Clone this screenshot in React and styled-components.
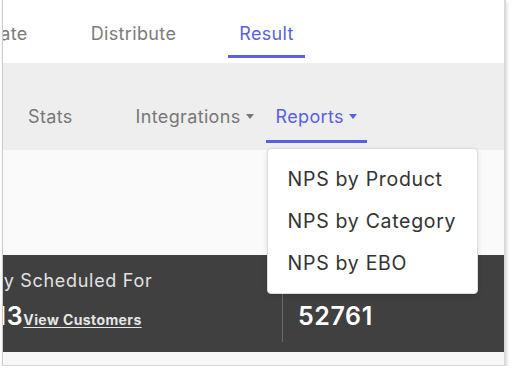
import React from "react";
import styled, { createGlobalStyle } from "styled-components";

const Global = createGlobalStyle`
  html, body { margin: 0; padding: 0; background: #ffffff; }
  body { font-family: Inter, "Noto Sans", sans-serif; -webkit-font-smoothing: antialiased; }
`;

const BLUE = "#5a5fe3";

const Frame = styled.div`
  position: relative;
  margin-left: 2px;
  width: 504px;
  height: 366px;
  box-sizing: border-box;
  border-left: 1px solid #cdcdcd;
  border-right: 2px solid #dadada;
  border-bottom: 1px solid #d6d6d6;
  box-shadow: 1px 2px 3px rgba(0, 0, 0, 0.15);
  background: #ffffff;
  display: flex;
  flex-direction: column;
  overflow: hidden;
`;

const TabBar = styled.div`
  height: 63px;
  flex: none;
  display: flex;
  align-items: flex-start;
  gap: 41px;
  margin-left: -45px;
  background: #ffffff;
`;

const Tab = styled.div`
  box-sizing: border-box;
  height: 58px;
  padding: 11px 11px 0;
  display: flex;
  align-items: center;
  font-size: 18px;
  letter-spacing: 0.35px;
  color: ${(p) => (p.$active ? BLUE : "#7b7b7b")};
  border-bottom: 3px solid ${(p) => (p.$active ? BLUE : "transparent")};
  white-space: nowrap;
`;

const SubNav = styled.div`
  height: 87px;
  flex: none;
  box-sizing: border-box;
  display: flex;
  align-items: flex-end;
  gap: 2px;
  padding: 0 0 7px 15px;
  background: #eeeeee;
  position: relative;
  z-index: 2;
`;

const NavItem = styled.div`
  position: relative;
  display: flex;
  align-items: center;
  gap: 5px;
  padding: 0 10px 13px;
  line-height: 20px;
  font-size: 18px;
  letter-spacing: 0.35px;
  color: ${(p) => (p.$active ? BLUE : "#777777")};
  border-bottom: 3px solid ${(p) => (p.$active ? BLUE : "transparent")};
  margin-right: ${(p) => p.$spaceAfter || 0}px;
  white-space: nowrap;
`;

const Caret = styled.span`
  width: 0;
  height: 0;
  border-left: 4.5px solid transparent;
  border-right: 4.5px solid transparent;
  border-top: 5px solid currentColor;
  margin-top: -2px;
`;

const Menu = styled.div`
  position: absolute;
  top: calc(100% + 8px);
  left: 1px;
  width: 211px;
  box-sizing: border-box;
  padding: 9px 0;
  background: #ffffff;
  border: 1px solid #dcdcdc;
  border-radius: 4px;
  box-shadow: 0 2px 5px rgba(0, 0, 0, 0.12);
`;

const MenuItem = styled.div`
  height: 42px;
  display: flex;
  align-items: center;
  padding-left: 20px;
  font-size: 19.5px;
  letter-spacing: 0.7px;
  color: #333333;
  white-space: nowrap;
`;

const Blank = styled.div`
  height: 105px;
  flex: none;
  background: #fafafa;
`;

const Panel = styled.div`
  height: 97px;
  flex: none;
  box-sizing: border-box;
  display: flex;
  padding: 10px 0;
  margin-left: -67px;
  background: #404040;
`;

const Stat = styled.div`
  width: ${(p) => p.$width}px;
  flex: none;
  box-sizing: border-box;
  padding: 6px 0 0 15px;
  border-left: ${(p) => (p.$divider ? "1px solid #6a6a6a" : "none")};
  display: flex;
  flex-direction: column;
  gap: 10px;
`;

const StatLabel = styled.div`
  line-height: 20px;
  font-size: 18px;
  letter-spacing: 0.7px;
  color: #e2e2e2;
  white-space: nowrap;
`;

const StatValue = styled.div`
  display: flex;
  align-items: baseline;
  line-height: 30px;
  font-size: 25px;
  font-weight: 600;
  letter-spacing: 0.6px;
  color: #ffffff;
  white-space: nowrap;
`;

const Link = styled.a`
  font-size: 14px;
  font-weight: 700;
  letter-spacing: 0.4px;
  color: #e6e6e6;
  text-decoration: underline;
  text-underline-offset: 2px;
`;

const Footer = styled.div`
  flex: 1;
  background: #f7f7f7;
`;

export default function App() {
  return (
    <>
      <Global />
      <Frame>
        <TabBar>
          <Tab>Create</Tab>
          <Tab>Distribute</Tab>
          <Tab $active>Result</Tab>
        </TabBar>
        <SubNav>
          <NavItem $spaceAfter={41}>Stats</NavItem>
          <NavItem>
            Integrations <Caret />
          </NavItem>
          <NavItem $active>
            Reports <Caret />
            <Menu>
              <MenuItem>NPS by Product</MenuItem>
              <MenuItem>NPS by Category</MenuItem>
              <MenuItem>NPS by EBO</MenuItem>
            </Menu>
          </NavItem>
        </SubNav>
        <Blank />
        <Panel>
          <Stat $width={346}>
            <StatLabel>Survey Scheduled For</StatLabel>
            <StatValue>
              14213
              <Link>View Customers</Link>
            </StatValue>
          </Stat>
          <Stat $width={240} $divider>
            <StatLabel>Total Customers</StatLabel>
            <StatValue>52761</StatValue>
          </Stat>
        </Panel>
        <Footer />
      </Frame>
    </>
  );
}
